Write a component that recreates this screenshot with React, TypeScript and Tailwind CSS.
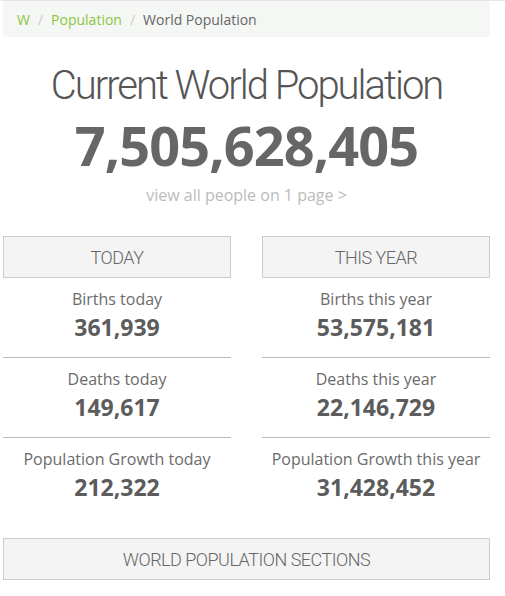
export default function App() {
  const today = [
    { label: 'Births today', value: '361,939' },
    { label: 'Deaths today', value: '149,617' },
    { label: 'Population Growth today', value: '212,322' },
  ];
  const year = [
    { label: 'Births this year', value: '53,575,181' },
    { label: 'Deaths this year', value: '22,146,729' },
    { label: 'Population Growth this year', value: '31,428,452' },
  ];

  const Column = ({ title, rows }: { title: string; rows: { label: string; value: string }[] }) => (
    <div className="flex flex-col">
      <div className="h-[42px] flex items-center justify-center border border-[#cccccc] bg-[#f4f4f4] text-[18px] font-light text-[#666] uppercase font-['Roboto',sans-serif] tracking-[-0.5px]">
        {title}
      </div>
      {rows.map((r, i) => (
        <div
          key={r.label}
          className={`flex flex-col items-center h-[80px] pt-[8px] ${i < rows.length - 1 ? 'border-b border-[#bbbbbb]' : ''}`}
        >
          <div className="text-[16px] leading-[26px] text-[#6b6b6b]">{r.label}</div>
          <div className="text-[23px] leading-[30px] font-bold text-[#5c5c5c]">{r.value}</div>
        </div>
      ))}
    </div>
  );

  return (
    <div className="w-[505px] h-[596px] bg-white font-['Open_Sans',sans-serif] border-t border-[#e6e6e6] overflow-hidden">
      <div className="pl-[3px] pr-[15px]">
        {/* Breadcrumb */}
        <div className="h-[36px] bg-[#f5f7f5] rounded-[3px] flex items-center px-[14px] text-[14px]">
          <span className="text-[#8cc63f]">W</span>
          <span className="text-[#cccccc] px-[8px]">/</span>
          <span className="text-[#8cc63f]">Population</span>
          <span className="text-[#cccccc] px-[8px]">/</span>
          <span className="text-[#666]">World Population</span>
        </div>

        {/* Counter */}
        <div className="flex flex-col items-center mt-[25px]">
          <h1 className="text-[40px] leading-[48px] font-light text-[#555] font-['Roboto',sans-serif] tracking-[-2px]">
            Current World Population
          </h1>
          <div className="text-[54px] leading-[62px] font-bold text-[#666] tracking-[-0.9px] mt-[4px]">7,505,628,405</div>
          <div className="text-[16px] leading-[22px] text-[#bbbbbb] mt-[8px]">view all people on 1 page &gt;</div>
        </div>

        {/* Today / This year */}
        <div className="grid grid-cols-2 gap-[31px] mt-[30px]">
          <Column title="Today" rows={today} />
          <Column title="This Year" rows={year} />
        </div>

        <div className="mt-[20px] h-[42px] flex items-center justify-center border border-[#cccccc] bg-[#f4f4f4] text-[18px] font-light text-[#666] uppercase font-['Roboto',sans-serif] tracking-[-0.5px]">
          World Population Sections
        </div>
      </div>
    </div>
  );
}
